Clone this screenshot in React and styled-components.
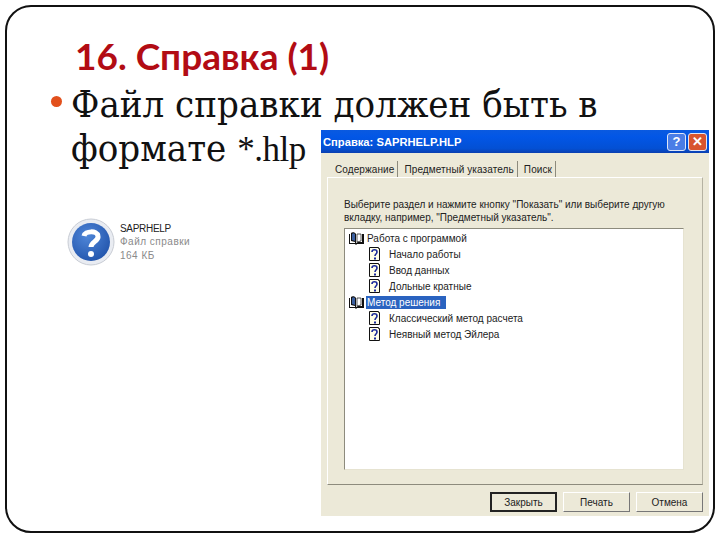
import React from 'react';
import styled, { createGlobalStyle } from 'styled-components';

const GlobalStyle = createGlobalStyle`
  html, body {
    margin: 0;
    padding: 0;
    background: #fff;
  }
`;

const Slide = styled.div`
  box-sizing: border-box;
  width: 710px;
  height: 528px;
  margin: 5px 0 0 5px;
  border: 2px solid #111;
  border-radius: 26px;
  padding: 23px 0 0 0;
  overflow: hidden;
`;

const Title = styled.h1`
  margin: 0 0 0 68px;
  font: bold 37px/52px Lato, "Noto Sans", sans-serif;
  color: #b20c14;
`;

const Lead = styled.div`
  display: flex;
  align-items: center;
  margin-left: 44px;
  height: 44px;
  font: 38px/44px "DejaVu Serif", "Liberation Serif", serif;
  font-stretch: condensed;
  color: #111;
  white-space: nowrap;
`;

const Bullet = styled.span`
  width: 11px;
  height: 11px;
  margin: 0 9px 5px 0;
  border-radius: 50%;
  background: #e2501c;
`;

const Columns = styled.div`
  display: flex;
  justify-content: space-between;
`;

const LeftColumn = styled.div`
  padding-left: 64px;
`;

const LeadCont = styled.div`
  font: 38px/44px "DejaVu Serif", "Liberation Serif", serif;
  font-stretch: condensed;
  color: #111;
  white-space: nowrap;
`;

const FileType = styled.span`
  font-family: "Liberation Serif", serif;
  font-size: 35px;
  letter-spacing: -0.5px;
`;

const FileItem = styled.div`
  display: flex;
  align-items: center;
  gap: 5px;
  margin: 46px 0 0 -4px;
`;

const FileMeta = styled.div`
  font: 10px/13.5px "Liberation Sans", sans-serif;
  letter-spacing: 0.5px;
  color: #8a8a8a;
`;

const FileName = styled.div`
  color: #222;
  letter-spacing: -0.3px;
`;

const Dialog = styled.div`
  width: 388px;
  height: 386px;
  margin: 4px 4px 0 0;
  background: #ece9d8;
  font: 10px "Liberation Sans", sans-serif;
  color: #222;
`;

const TitleBar = styled.div`
  display: flex;
  align-items: center;
  justify-content: space-between;
  height: 23px;
  padding: 0 2px;
  background: linear-gradient(180deg, #0a5ae0 0%, #0256e6 30%, #0350d4 80%, #0a3fb0 100%);
  color: #fff;
  font-weight: bold;
  font-size: 11.2px;
`;

const WinButtons = styled.div`
  display: flex;
  gap: 2px;
`;

const WinButton = styled.div`
  box-sizing: border-box;
  width: 19px;
  height: 18px;
  display: flex;
  align-items: center;
  justify-content: center;
  border: 1px solid #dfe6f6;
  border-radius: 3px;
  background: ${(p) => (p.$close ? '#d8552f' : '#4a7de6')};
  color: #fff;
  font-size: 13px;
  font-weight: bold;
`;

const Tabs = styled.div`
  display: flex;
  height: 16px;
  padding: 8px 0 0 11px;
`;

const Tab = styled.div`
  display: flex;
  align-items: center;
  padding: 0 3px;
  margin-right: 3px;
  letter-spacing: 0.1px;
  border-right: 1px solid #8d8b7d;
`;

const Panel = styled.div`
  box-sizing: border-box;
  height: 308px;
  margin: 0 6px;
  padding: 20px 18px 14px 16px;
  border: 1px solid #fff;
  border-right-color: #b5b2a2;
  border-bottom-color: #8d8b7d;
`;

const Hint = styled.div`
  line-height: 13px;
  margin-bottom: 4px;
`;

const Tree = styled.div`
  box-sizing: border-box;
  height: 242px;
  padding: 1px 0 0 3px;
  background: #fff;
  border: 1px solid #8d8b7d;
  border-right-color: #e6e3d1;
  border-bottom-color: #e6e3d1;
`;

const TreeRow = styled.div`
  display: flex;
  align-items: center;
  height: 16px;
  padding-left: ${(p) => (p.$leaf ? 20 : 0)}px;
`;

const TreeLabel = styled.span`
  margin-left: ${(p) => (p.$leaf ? 7 : 1)}px;
  padding: 1px ${(p) => (p.$selected ? 6 : 1)}px 1px 1px;
  background: ${(p) => (p.$selected ? '#2a63c0' : 'transparent')};
  color: ${(p) => (p.$selected ? '#fff' : '#222')};
`;

const Footer = styled.div`
  display: flex;
  justify-content: flex-end;
  gap: 6px;
  padding: 7px 6px 0 0;
`;

const Button = styled.div`
  box-sizing: border-box;
  width: 67px;
  height: 20px;
  display: flex;
  align-items: center;
  justify-content: center;
  border: 1px solid;
  border-color: #fff #777 #777 #fff;
  ${(p) => p.$primary && 'border: 2px solid #222;'}
`;

const HelpIcon = () => (
  <svg width="48" height="48" viewBox="0 0 48 48">
    <defs>
      <radialGradient id="helpBlue" cx="0.4" cy="0.35" r="0.8">
        <stop offset="0" stopColor="#4f86d8" />
        <stop offset="1" stopColor="#1c4ea6" />
      </radialGradient>
    </defs>
    <circle cx="24" cy="24" r="23" fill="#e9ecf2" stroke="#c8ccd4" />
    <circle cx="24" cy="24" r="19" fill="url(#helpBlue)" />
    <path d="M17 18c1-5 13-6 14 0 1 5-7 6-7 11" fill="none" stroke="#fff" strokeWidth="5" />
    <circle cx="24" cy="36" r="3" fill="#fff" />
  </svg>
);

const BookIcon = () => (
  <svg width="17" height="13" viewBox="0 0 17 13">
    <path d="M1 2v10h6l1 1 1-1h7V2h-2v8h-4l-2 1V2C7 0 4 0 3 1v8l4 1v1H2V2z" fill="#111" />
    <path d="M4 2c1-1 2-1 3 0v7l-3-1z" fill="#3a5fa0" />
    <path d="M9 2h4v7l-4 1z" fill="#fff" stroke="#111" strokeWidth="0.7" />
  </svg>
);

const PageIcon = () => (
  <svg width="13" height="15" viewBox="0 0 13 15">
    <path d="M1.5.5h9v1h1v12h-10z" fill="#ffffe8" stroke="#111" />
    <path d="M4 5c0-3 5-3 5 0 0 2-2 2-2 4" fill="none" stroke="#1a2a9a" strokeWidth="1.6" />
    <rect x="6" y="10.5" width="2" height="2" fill="#1a2a9a" />
  </svg>
);

const BookRow = ({ label, selected }) => (
  <TreeRow>
    <BookIcon />
    <TreeLabel $selected={selected}>{label}</TreeLabel>
  </TreeRow>
);

const PageRow = ({ label }) => (
  <TreeRow $leaf>
    <PageIcon />
    <TreeLabel $leaf>{label}</TreeLabel>
  </TreeRow>
);

export default function App() {
  return (
    <>
      <GlobalStyle />
      <Slide>
        <Title>16. Справка (1)</Title>
        <Lead>
          <Bullet />
          Файл справки должен быть в
        </Lead>
        <Columns>
          <LeftColumn>
            <LeadCont>
              формате <FileType>*.hlp</FileType>
            </LeadCont>
            <FileItem>
              <HelpIcon />
              <FileMeta>
                <FileName>SAPRHELP</FileName>
                Файл справки
                <br />
                164 КБ
              </FileMeta>
            </FileItem>
          </LeftColumn>
          <Dialog>
            <TitleBar>
              Справка: SAPRHELP.HLP
              <WinButtons>
                <WinButton>?</WinButton>
                <WinButton $close>✕</WinButton>
              </WinButtons>
            </TitleBar>
            <Tabs>
              <Tab>Содержание</Tab>
              <Tab>Предметный указатель</Tab>
              <Tab>Поиск</Tab>
            </Tabs>
            <Panel>
              <Hint>
                Выберите раздел и нажмите кнопку "Показать" или выберите другую
                <br />
                вкладку, например, "Предметный указатель".
              </Hint>
              <Tree>
                <BookRow label="Работа с программой" />
                <PageRow label="Начало работы" />
                <PageRow label="Ввод данных" />
                <PageRow label="Дольные кратные" />
                <BookRow label="Метод решения" selected />
                <PageRow label="Классический метод расчета" />
                <PageRow label="Неявный метод Эйлера" />
              </Tree>
            </Panel>
            <Footer>
              <Button $primary>Закрыть</Button>
              <Button>Печать</Button>
              <Button>Отмена</Button>
            </Footer>
          </Dialog>
        </Columns>
      </Slide>
    </>
  );
}
